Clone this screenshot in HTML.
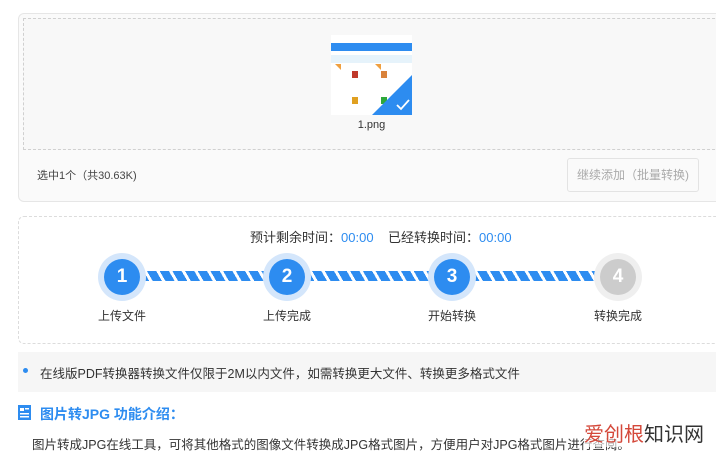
<!DOCTYPE html>
<html><head><meta charset="utf-8"><style>
body{margin:0;width:716px;height:450px;overflow:hidden;background:#fff;font-family:"Liberation Sans","Noto Sans CJK SC",sans-serif;position:relative}
.a{position:absolute}
.card1{left:18px;top:13px;width:720px;height:187px;border:1px solid #e6e6e6;border-radius:6px;background:#fafafa}
.dash1{left:23px;top:18px;width:710px;height:130px;border:1px dashed #d0d0d0;background:#f8f8f8}
.btn{left:567px;top:158px;width:130px;height:32px;border:1px solid #e3e3e3;border-radius:3px;background:#fafafa;color:#aaa;font-size:12px;line-height:32px;text-align:center}
.card2{left:18px;top:216px;width:720px;height:126px;border:1px dashed #dcdcdc;border-radius:6px}
.bar{top:271px;height:10px;background:repeating-linear-gradient(60deg,#2d8cf0 0 8px,#fff 8px 11px)}
.c{width:36px;height:36px;border-radius:50%;background:#2d8cf0;color:#fff;font-weight:bold;font-size:19px;line-height:36px;text-align:center;box-shadow:0 0 0 6px #d4e6fb;top:259px}
.lab{top:307px;font-size:12px;color:#333;width:80px;text-align:center}
</style></head><body>
<div class="a card1"></div>
<div class="a dash1"></div>
<div class="a" style="left:331px;top:35px;width:81px;height:80px;background:#fff;overflow:hidden">
 <div class="a" style="left:0;top:8px;width:81px;height:8px;background:#2d8cf0"></div>
 <div class="a" style="left:0;top:20px;width:81px;height:8px;background:#e6f3fb"></div>
 <div class="a" style="left:21px;top:36px;width:6px;height:7px;background:#c0392b"></div>
 <div class="a" style="left:50px;top:36px;width:6px;height:7px;background:#d9823b"></div>
 <div class="a" style="left:21px;top:62px;width:6px;height:7px;background:#e0a020"></div>
 <div class="a" style="left:50px;top:62px;width:6px;height:7px;background:#2ea83a"></div>
 <svg class="a" style="left:0;top:0" width="81" height="80"><polygon points="81,40 81,80 41,80" fill="#2d8cf0"/><path d="M66 70 l4 4 l8 -9" stroke="#fff" stroke-width="1.8" fill="none"/><polygon points="4,29 10,29 10,35" fill="#f0a040"/><polygon points="44,29 50,29 50,35" fill="#f0a040"/></svg>
</div>
<div class="a" style="left:331px;top:119px;width:81px;text-align:center;font-size:11px;color:#333">1.png</div>
<div class="a" style="left:37px;top:167px;font-size:11px;color:#444">选中1个（共30.63K)</div>
<div class="a btn">继续添加（批量转换)</div>
<div class="a card2"></div>
<div class="a" style="left:250px;top:227px;font-size:13px;color:#333">预计剩余时间：<span style="color:#2d8cf0">00:00</span>&nbsp;&nbsp;&nbsp; 已经转换时间：<span style="color:#2d8cf0">00:00</span></div>
<div class="a bar" style="left:140px;width:465px"></div>
<div class="a c" style="left:104px">1</div>
<div class="a c" style="left:269px">2</div>
<div class="a c" style="left:434px">3</div>
<div class="a c" style="left:600px;background:#ccc;box-shadow:0 0 0 6px #efefef">4</div>
<div class="a lab" style="left:82px">上传文件</div>
<div class="a lab" style="left:247px">上传完成</div>
<div class="a lab" style="left:412px">开始转换</div>
<div class="a lab" style="left:578px">转换完成</div>
<div class="a" style="left:18px;top:352px;width:700px;height:40px;background:#f6f6f6"></div>
<div class="a" style="left:23px;top:368px;width:5px;height:5px;border-radius:50%;background:#2d8cf0"></div>
<div class="a" style="left:40px;top:363px;font-size:12.5px;color:#333">在线版PDF转换器转换文件仅限于2M以内文件，如需转换更大文件、转换更多格式文件</div>
<svg class="a" style="left:17px;top:404px" width="16" height="17"><rect x="1" y="1" width="13" height="15" fill="#2d8cf0"/><rect x="3" y="4" width="4" height="3" fill="#fff"/><rect x="8" y="4" width="4" height="1.5" fill="#fff"/><rect x="3" y="9" width="9" height="1.5" fill="#fff"/><rect x="3" y="12" width="9" height="1.5" fill="#fff"/></svg>
<div class="a" style="left:40px;top:404px;font-size:14px;font-weight:bold;color:#2d8cf0">图片转JPG 功能介绍：</div>
<div class="a" style="left:32px;top:434px;font-size:12.5px;color:#333">图片转成JPG在线工具，可将其他格式的图像文件转换成JPG格式图片，方便用户对JPG格式图片进行查阅。</div>
<div class="a" style="left:584px;top:418px;font-size:20px;color:#333;background:rgba(255,255,255,.6)"><span style="color:#d4483a">爱创根</span>知识网</div>
</body></html>
